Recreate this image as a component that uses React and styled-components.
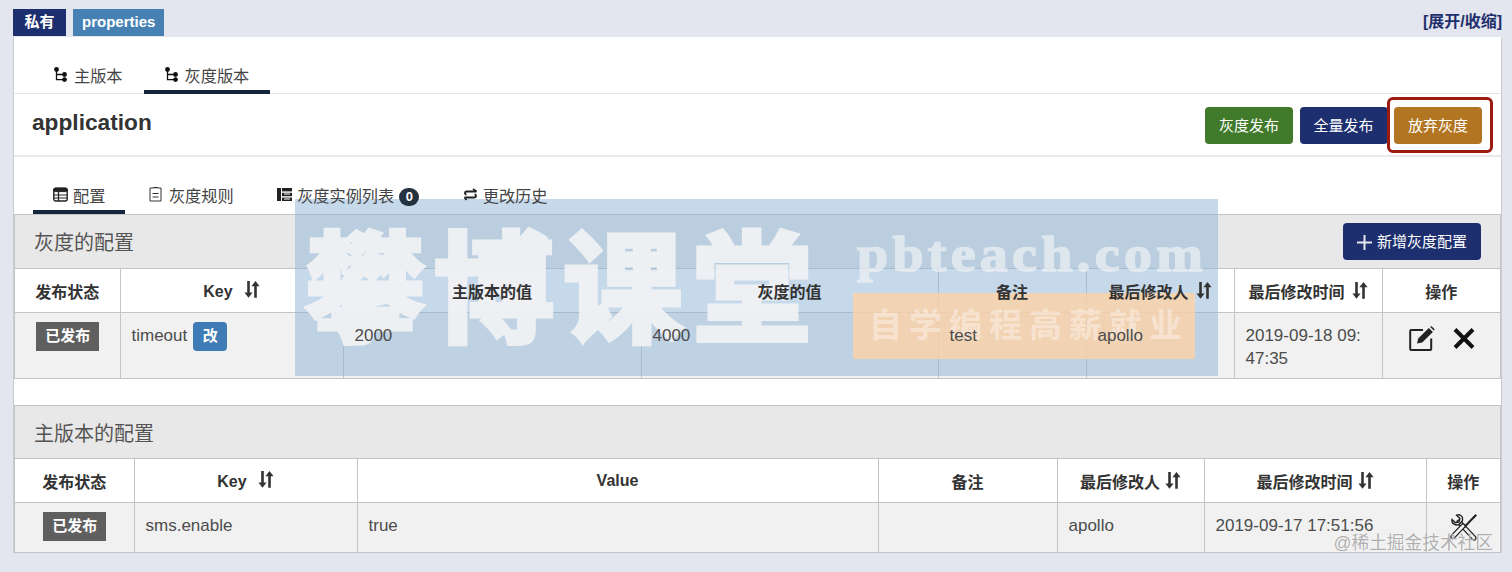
import React from 'react';
import styled, { createGlobalStyle } from 'styled-components';

const GlobalStyle = createGlobalStyle`
  html, body {
    margin: 0;
    padding: 0;
    background: #e3e5ef;
  }
  body {
    font-family: "Liberation Sans", "Noto Sans CJK SC", sans-serif;
    color: #333;
  }
`;

const Page = styled.div`
  position: relative;
  width: 1512px;
  height: 572px;
  overflow: hidden;
  box-sizing: border-box;
  padding: 9px 10px 0 13px;
`;

const TopBar = styled.div`
  display: flex;
  justify-content: space-between;
  height: 28px;
`;

const Labels = styled.div`
  display: flex;
  gap: 7px;
`;

const Label = styled.span`
  height: 27px;
  line-height: 26px;
  padding: 0 ${(p) => p.$pad}px;
  color: #fff;
  font-weight: bold;
  font-size: 15px;
  background: ${(p) => p.$bg};
`;

const Toggle = styled.a`
  font-size: 16px;
  font-weight: bold;
  line-height: 26px;
  color: #1f2f6b;
`;

const Panel = styled.div`
  box-sizing: border-box;
  width: 1489px;
  height: 516px;
  background: #fff;
  border: 1px solid #cbcbd0;
  border-top: none;
`;

const TabBar = styled.div`
  display: flex;
  align-items: flex-end;
  height: ${(p) => p.$h}px;
  padding-left: 19px;
  gap: ${(p) => p.$gap}px;
  border-bottom: 1px solid ${(p) => p.$line};
  box-sizing: border-box;
`;

const Tab = styled.div`
  position: relative;
  z-index: 2;
  display: flex;
  align-items: center;
  box-sizing: border-box;
  height: 36px;
  padding: 1px ${(p) => p.$pad}px 0;
  gap: ${(p) => p.$gap}px;
  margin-bottom: -1px;
  font-size: 16.2px;
  color: #444;
  border-bottom: 4px solid ${(p) => (p.$active ? '#14263c' : 'transparent')};
  border-radius: 3px 3px 0 0;
`;

const Count = styled.span`
  display: inline-block;
  width: 20px;
  height: 18px;
  line-height: 18px;
  border-radius: 9px;
  margin-top: 4px;
  text-align: center;
  background: #24313f;
  color: #fff;
  font-size: 13px;
  font-weight: bold;
`;

const TitleRow = styled.div`
  display: flex;
  justify-content: space-between;
  box-sizing: border-box;
  height: 63px;
  padding: 13px 19px 0 18px;
  border-bottom: 2px solid #e8e8e8;
`;

const AppName = styled.div`
  font-size: 22.7px;
  font-weight: bold;
  line-height: 30px;
  color: #333;
`;

const Actions = styled.div`
  display: flex;
  gap: 6.5px;
`;

const Button = styled.div`
  display: flex;
  align-items: center;
  justify-content: center;
  gap: 5px;
  box-sizing: border-box;
  width: ${(p) => p.$w}px;
  height: 37px;
  padding-bottom: 3px;
  border-radius: 4px;
  background: ${(p) => p.$bg};
  color: #fff;
  font-size: 15px;
`;

const Section = styled.div`
  border: 1px solid #c4c4c4;
  border-width: 1px 1px 0 1px;
  margin-top: ${(p) => p.$top}px;
`;

const SectionHead = styled.div`
  display: flex;
  align-items: center;
  justify-content: space-between;
  box-sizing: border-box;
  height: ${(p) => p.$h}px;
  padding: 0 19px 0 19px;
  background: #e8e8e8;
`;

const SectionTitle = styled.div`
  font-size: 20px;
  color: #555;
`;

const Table = styled.table`
  width: 100%;
  table-layout: fixed;
  border-collapse: collapse;
`;

const Col = styled.col`
  width: ${(p) => p.$w}px;
`;

const Th = styled.th`
  height: 43px;
  padding: 0 6px;
  font-size: 16px;
  font-weight: bold;
  color: #333;
  background: #fff;
  border: 1px solid #c4c4c4;
  border-left-width: ${(p) => (p.$first ? 0 : 1)}px;
  border-right-width: ${(p) => (p.$last ? 0 : 1)}px;
  white-space: nowrap;
`;

const Td = styled.td`
  box-sizing: border-box;
  height: ${(p) => p.$h}px;
  padding: 11px 10px 8px 11px;
  vertical-align: top;
  font-size: 17px;
  line-height: 23px;
  color: #4c4c4c;
  background: #f1f1f1;
  border: 1px solid #c4c4c4;
  border-left-width: ${(p) => (p.$first ? 0 : 1)}px;
  border-right-width: ${(p) => (p.$last ? 0 : 1)}px;
  text-align: ${(p) => (p.$center ? 'center' : 'left')};
`;

// table text stays readable on top of the watermark
const CellText = styled.span`
  position: relative;
  z-index: 2;
`;

const Status = styled.span`
  display: inline-block;
  width: 63px;
  height: 29px;
  line-height: 27px;
  margin-top: -2px;
  background: #5f5f5f;
  color: #fff;
  font-size: 15px;
  font-weight: bold;
  vertical-align: top;
`;

const Changed = styled.span`
  display: inline-block;
  width: 34px;
  height: 29px;
  line-height: 27px;
  margin: -2px 0 0 6px;
  border-radius: 4px;
  text-align: center;
  background: #3f7cb5;
  color: #fff;
  font-size: 15px;
  font-weight: bold;
  vertical-align: top;
`;

const OpIcons = styled.div`
  display: flex;
  justify-content: center;
  align-items: center;
  gap: 18px;
  margin-top: 2px;
`;

const ToolsWrap = styled.div`
  display: flex;
  justify-content: center;
  margin-top: -1px;
`;

const Highlight = styled.div`
  position: absolute;
  left: 1387px;
  top: 97px;
  width: 106px;
  height: 56px;
  box-sizing: border-box;
  border: 3px solid #9c1a10;
  border-radius: 6px;
`;

const Watermark = styled.div`
  position: absolute;
  z-index: 1;
  left: 295px;
  top: 199px;
  width: 923px;
  height: 177px;
  background: rgba(140, 180, 215, 0.5);
  overflow: hidden;
`;

const BrandCn = styled.div`
  position: absolute;
  left: 10px;
  top: 10px;
  font-size: 120px;
  line-height: 165px;
  font-weight: 700;
  letter-spacing: 9px;
  white-space: nowrap;
  color: #f2f3f5;
  -webkit-text-stroke: 5px #f2f3f5;
  opacity: 0.92;
  filter: blur(0.6px);
`;

const BrandEn = styled.div`
  position: absolute;
  left: 562px;
  top: 25px;
  font-family: "Liberation Serif", serif;
  font-size: 50px;
  line-height: 60px;
  font-weight: bold;
  letter-spacing: 3.8px;
  white-space: nowrap;
  color: #f0f2f4;
  -webkit-text-stroke: 1.5px #f0f2f4;
  opacity: 0.7;
  transform: scaleX(1.12);
  transform-origin: left center;
`;

const Slogan = styled.div`
  position: absolute;
  left: 558px;
  top: 94px;
  width: 342px;
  height: 66px;
  line-height: 66px;
  padding-left: 16px;
  box-sizing: border-box;
  font-size: 33px;
  font-weight: bold;
  letter-spacing: 7px;
  white-space: nowrap;
  color: rgba(255, 255, 255, 0.4);
  background: rgba(255, 210, 165, 0.78);
`;

const Credit = styled.div`
  position: absolute;
  z-index: 3;
  right: 19px;
  top: 532px;
  font-size: 17.7px;
  line-height: 22px;
  white-space: nowrap;
  color: rgba(140, 140, 140, 0.7);
  text-shadow: 0 0 1px #fff;
`;

const Sort = ({ ml }) => (
  <svg
    width="16"
    height="17"
    viewBox="0 0 16 17"
    style={{ marginLeft: ml, verticalAlign: -1 }}>
    <path d="M3.2 0h2.6v11.5H8.6L4.5 16.8.4 11.5h2.8z" fill="#333" />
    <path d="M10.2 16.8h2.6V5.3h2.8L11.5 0 7.4 5.3h2.8z" fill="#333" />
  </svg>
);

const Branch = () => (
  <svg width="13" height="15" viewBox="0 0 13 15" fill="#111">
    <circle cx="2.5" cy="2.5" r="2.4" />
    <circle cx="10.5" cy="7.5" r="2.4" />
    <circle cx="10.5" cy="12.6" r="2.4" />
    <path
      d="M2.5 3v9.6h7M2.5 7.5h7"
      fill="none"
      stroke="#111"
      strokeWidth="1.3"
    />
  </svg>
);

const TableIcon = () => (
  <svg width="15" height="15" viewBox="0 0 15 15" fill="none" stroke="#222">
    <rect x="0.8" y="1.2" width="13.4" height="12.8" rx="2" strokeWidth="1.4" />
    <rect x="0.8" y="1.2" width="13.4" height="3.4" rx="1.5" fill="#222" />
    <path d="M1 8h13M1 11h13M5.5 4.5V14" strokeWidth="1.2" />
  </svg>
);

const RuleIcon = () => (
  <svg width="15" height="15" viewBox="0 0 15 15" fill="none" stroke="#333">
    <path d="M4 1H1v13h11V1H9" strokeWidth="1" />
    <path d="M4 .6h5M3.5 6.5h6M3.5 10h6" strokeWidth="1.1" />
  </svg>
);

const InstanceIcon = () => (
  <svg width="15" height="15" viewBox="0 0 15 15" fill="#222">
    <rect x="0" y="1" width="4" height="13" />
    <rect x="5" y="1" width="10" height="3.4" />
    <rect x="5" y="5.8" width="10" height="3.4" />
    <rect x="5" y="10.6" width="10" height="3.4" />
    <path d="M7 7h6M7 12h6" stroke="#fff" />
  </svg>
);

const SwapIcon = () => (
  <svg
    width="15"
    height="13"
    viewBox="0 0 14 13"
    fill="none"
    stroke="#222"
    strokeWidth="1.8">
    <path d="M13 3.5H3C1 3.5 1 6.5 3 6.5" />
    <path d="M1 9.5h10c2 0 2-3 0-3" />
    <path d="M9.5 1l3.5 2.5M3 12L1 9.5" />
  </svg>
);

const PlusIcon = () => (
  <svg width="15" height="15" viewBox="0 0 15 15" stroke="#e6e8ef" strokeWidth="2" style={{ marginTop: 4 }}>
    <path d="M7.5 0v15M0 7.5h15" />
  </svg>
);

const EditIcon = () => (
  <svg width="26" height="25" viewBox="0 0 26 25" fill="none">
    <path
      d="M14 4H2.2a1 1 0 0 0-1 1v18a1 1 0 0 0 1 1h19a1 1 0 0 0 1-1V12.5"
      stroke="#222"
      strokeWidth="2"
    />
    <path
      d="M8 17.5l1.2-5L19.8 1.9l4.1 4.1L13.2 16.5zM21 .8l1.6-.6 3 3-.6 1.6z"
      fill="#222"
    />
  </svg>
);

const CloseIcon = () => (
  <svg width="22" height="21" viewBox="0 0 22 21" stroke="#111" strokeWidth="4">
    <path d="M2 1.5l18 18M20 1.5l-18 18" />
  </svg>
);

const ToolsIcon = () => (
  <svg width="28" height="28" viewBox="0 0 28 28" fill="none" stroke="#222">
    <path d="M9 9l15 16" strokeWidth="5.2" strokeLinecap="round" />
    <path d="M9 9l15 16" strokeWidth="2.6" stroke="#f1f1f1" strokeLinecap="round" />
    <path
      d="M2 6.5l3.6 3.2 3.4-.8.9-3.4L6.6 2.2C9.6.8 13 3 12.6 6.4c-.1.9-.3 1.6-.7 2.2l-3 3c-2.9 1.2-7.5-.5-6.9-5.1z"
      fill="#f1f1f1"
      strokeWidth="1.4"
    />
    <path d="M24 4l-10 10.5" strokeWidth="2" />
    <path d="M25.5 1.5l1 1-2.4 2.6-1-1z" fill="#222" strokeWidth="1" />
    <path d="M13 13L3 23.5" strokeWidth="5.4" strokeLinecap="round" />
    <path d="M13 13L3 23.5" strokeWidth="2.8" stroke="#f1f1f1" strokeLinecap="round" />
  </svg>
);

const grayCols = [105, 223, 298, 297, 148, 148, 148, 118];
const mainCols = [119, 223, 521, 179, 147, 222, 74];

const App = () => {
  return (
    <Page>
      <GlobalStyle />
      <TopBar>
        <Labels>
          <Label $bg="#1e2f6f" $pad={11.5}>私有</Label>
          <Label $bg="#4781b4" $pad={9}>properties</Label>
        </Labels>
        <Toggle>[展开/收缩]</Toggle>
      </TopBar>
      <Panel>
        <TabBar $h={57} $gap={0} $line="#e6e6e6">
          <Tab $pad={21} $gap={7}><Branch />主版本</Tab>
          <Tab $pad={21} $gap={7} $active><Branch />灰度版本</Tab>
        </TabBar>
        <TitleRow>
          <AppName>application</AppName>
          <Actions>
            <Button $w={88} $bg="#417a2a">灰度发布</Button>
            <Button $w={88} $bg="#1e2f6f">全量发布</Button>
            <Button $w={88} $bg="#b27522">放弃灰度</Button>
          </Actions>
        </TitleRow>
        <TabBar $h={57} $gap={3.5} $line="transparent">
          <Tab $pad={20} $gap={5} $active><TableIcon />配置</Tab>
          <Tab $pad={20} $gap={5}><RuleIcon />灰度规则</Tab>
          <Tab $pad={20} $gap={5}><InstanceIcon />灰度实例列表<Count>0</Count></Tab>
          <Tab $pad={20} $gap={5}><SwapIcon />更改历史</Tab>
        </TabBar>
        <Section $top={0}>
          <SectionHead $h={53}>
            <SectionTitle>灰度的配置</SectionTitle>
            <Button $w={138} $bg="#1e2f6f"><PlusIcon />新增灰度配置</Button>
          </SectionHead>
          <Table>
            <colgroup>
              {grayCols.map((w, i) => <Col key={i} $w={w} />)}
            </colgroup>
            <thead>
              <tr>
                <Th $first>发布状态</Th>
                <Th>Key<Sort ml={11} /></Th>
                <Th><CellText>主版本的值</CellText></Th>
                <Th><CellText>灰度的值</CellText></Th>
                <Th><CellText>备注</CellText></Th>
                <Th><CellText>最后修改人<Sort ml={7} /></CellText></Th>
                <Th>最后修改时间<Sort ml={7} /></Th>
                <Th $last>操作</Th>
              </tr>
            </thead>
            <tbody>
              <tr>
                <Td $first $center $h={66}><Status>已发布</Status></Td>
                <Td $h={66}>timeout<Changed>改</Changed></Td>
                <Td $h={66}><CellText>2000</CellText></Td>
                <Td $h={66}><CellText>4000</CellText></Td>
                <Td $h={66}><CellText>test</CellText></Td>
                <Td $h={66}><CellText>apollo</CellText></Td>
                <Td $h={66}>2019-09-18 09:<wbr />47:35</Td>
                <Td $last $h={66}>
                  <OpIcons><EditIcon /><CloseIcon /></OpIcons>
                </Td>
              </tr>
            </tbody>
          </Table>
        </Section>
        <Section $top={26}>
          <SectionHead $h={52}>
            <SectionTitle>主版本的配置</SectionTitle>
          </SectionHead>
          <Table>
            <colgroup>
              {mainCols.map((w, i) => <Col key={i} $w={w} />)}
            </colgroup>
            <thead>
              <tr>
                <Th $first>发布状态</Th>
                <Th>Key<Sort ml={11} /></Th>
                <Th>Value</Th>
                <Th>备注</Th>
                <Th>最后修改人<Sort ml={5} /></Th>
                <Th>最后修改时间<Sort ml={5} /></Th>
                <Th $last>操作</Th>
              </tr>
            </thead>
            <tbody>
              <tr>
                <Td $first $center $h={50}><Status>已发布</Status></Td>
                <Td $h={50}>sms.enable</Td>
                <Td $h={50}>true</Td>
                <Td $h={50}></Td>
                <Td $h={50}>apollo</Td>
                <Td $h={50}>2019-09-17 17:51:56</Td>
                <Td $last $h={50}><ToolsWrap><ToolsIcon /></ToolsWrap></Td>
              </tr>
            </tbody>
          </Table>
        </Section>
      </Panel>
      <Highlight />
      <Watermark>
        <BrandCn>攀博课堂</BrandCn>
        <BrandEn>pbteach.com</BrandEn>
        <Slogan>自学编程高薪就业</Slogan>
      </Watermark>
      <Credit>@稀土掘金技术社区</Credit>
    </Page>
  );
};

export default App;
